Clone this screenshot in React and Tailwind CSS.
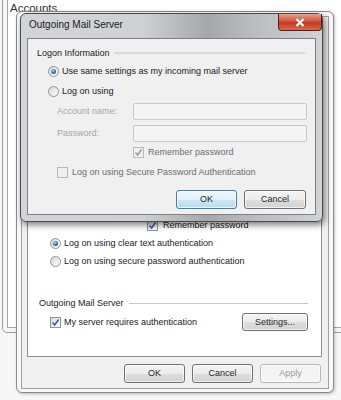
import React from "react";

function Radio({ checked }) {
  return (
    <span className="flex h-[11px] w-[11px] shrink-0 items-center justify-center rounded-full border border-[#8f9496] bg-[linear-gradient(135deg,#d4d6d8,#ffffff)]">
      {checked && (
        <span className="h-[5px] w-[5px] rounded-full bg-[radial-gradient(circle_at_40%_35%,#a9d8f3,#2f6da3_55%,#1d456e)]" />
      )}
    </span>
  );
}

function Check({ checked, disabled }) {
  return (
    <span
      className={
        "flex h-[11px] w-[11px] shrink-0 items-center justify-center border " +
        (disabled
          ? "border-[#b8b8b8] bg-[#f0f0f0]"
          : "border-[#8f9496] bg-[linear-gradient(135deg,#d8dadc,#ffffff)]")
      }
    >
      {checked && (
        <svg width="9" height="9" viewBox="0 0 9 9">
          <path
            d="M1.5 4.5 L3.6 7 L7.6 1.5"
            fill="none"
            stroke={disabled ? "#9a9a9a" : "#3d5a8c"}
            strokeWidth="1.5"
          />
        </svg>
      )}
    </span>
  );
}

function Btn({ children, kind = "normal", className = "" }) {
  const styles = {
    normal:
      "border-[#707070] bg-[linear-gradient(180deg,#f4f4f4_0%,#ececec_50%,#dedede_50%,#d2d2d2_100%)] text-[#1e1e1e]",
    def: "border-[#3c7fb1] bg-[linear-gradient(180deg,#eef7fc_0%,#e0f1fb_50%,#cbe7f8_50%,#b6dcf3_100%)] text-[#1e1e1e]",
    disabled: "border-[#b5b8ba] bg-[#f4f4f4] text-[#9a9a9a]",
  };
  return (
    <div
      className={
        "flex items-center justify-center rounded-[3px] border shadow-[inset_0_0_0_1px_rgba(255,255,255,0.7)] " +
        styles[kind] +
        " " +
        className
      }
    >
      {children}
    </div>
  );
}

export default function App() {
  return (
    <div className="relative h-[400px] w-[341px] overflow-hidden bg-[#f7f7f7] font-['Liberation_Sans',Arial,sans-serif] text-[9px] leading-[11px] text-[#202020]">
      {/* Accounts window (back) */}
      <div className="absolute left-[2px] top-[-20px] h-[353px] w-[400px] rounded-[5px] border border-[#9c9c9c] bg-[#f6f6f6] p-[4px]">
        <div className="h-full border border-[#a6a6a6] bg-white pl-[2px] pt-[16px] text-[11.5px] leading-[13px] text-[#303030]">
          Accounts
        </div>
      </div>

      {/* Middle dialog */}
      <div className="absolute left-[16px] top-[11px] h-[382px] w-[318px] rounded-[6px] border border-[#8a8a8a] bg-[#f8f8f8] px-[4px] pb-[3px] pt-[4px] shadow-[1px_1px_3px_rgba(0,0,0,0.25)]">
        <div className="flex h-full flex-col border border-[#a0a0a0] bg-[#f0f0f0] pb-[5px] pl-[5px] pr-[6px] pt-[24px]">
          <div className="flex flex-1 flex-col justify-end border border-[#8e8f8f] bg-white pb-[24px]">
            <div className="flex h-[18px] items-center gap-[5px] pl-[119px]">
              <Check checked />
              <span>Remember password</span>
            </div>
            <div className="flex h-[18px] items-center gap-[3px] pl-[22px]">
              <Radio checked />
              <span>Log on using clear text authentication</span>
            </div>
            <div className="flex h-[18px] items-center gap-[3px] pl-[22px]">
              <Radio />
              <span>Log on using secure password authentication</span>
            </div>
            <div className="h-[24px]" />
            <div className="flex h-[18px] items-center pl-[11px] pr-[13px]">
              <span>Outgoing Mail Server</span>
              <div className="ml-[5px] h-0 flex-1 border-t border-[#c8c8c8]" />
            </div>
            <div className="flex h-[20px] items-center pl-[22px] pr-[13px]">
              <Check checked />
              <span className="ml-[3px]">My server requires authentication</span>
              <Btn className="ml-auto h-[18px] w-[66px]">Settings...</Btn>
            </div>
          </div>
          <div className="mt-[7px] flex justify-end gap-[7px] pr-[1px]">
            <Btn className="h-[19px] w-[61px]">OK</Btn>
            <Btn className="h-[19px] w-[61px]">Cancel</Btn>
            <Btn kind="disabled" className="h-[19px] w-[61px]">Apply</Btn>
          </div>
        </div>
      </div>

      {/* Front dialog: Outgoing Mail Server */}
      <div className="absolute left-[20px] top-[13px] flex h-[209px] w-[303px] flex-col rounded-[6px] border border-[#4a4a4a] bg-[linear-gradient(90deg,#d2d5d8_0%,#cfd2d5_40%,#a5a8ab_62%,#bbbec1_78%,#d0d3d6_100%)] px-[6px] pb-[6px] shadow-[2px_3px_6px_rgba(0,0,0,0.5)]">
        <div className="-mr-[6px] flex h-[24px] items-start">
          <span className="pl-[2px] pt-[5px] text-[10px] leading-[12px] text-[#1a1a1a]">
            Outgoing Mail Server
          </span>
          <div className="ml-auto flex h-[17px] w-[44px] items-center justify-center rounded-b-[4px] border border-t-0 border-[#5a1c14] bg-[linear-gradient(180deg,#e8a08f_0%,#d4543c_45%,#c23a22_55%,#d86a4e_100%)]">
            <svg width="10" height="9" viewBox="0 0 10 9">
              <path d="M1.5 1 L8.5 8 M8.5 1 L1.5 8" stroke="white" strokeWidth="2.2" />
            </svg>
          </div>
        </div>
        <div className="flex flex-1 flex-col border border-[#7d8185] bg-[#f0f0f0] pt-[6px]">
          <div className="flex h-[16px] items-center pl-[9px] pr-[10px]">
            <span>Logon Information</span>
            <div className="ml-[4px] h-[2px] flex-1 bg-[#d8d8d8]" />
          </div>
          <div className="flex h-[20px] items-center gap-[3px] pl-[20px]">
            <Radio checked />
            <span>Use same settings as my incoming mail server</span>
          </div>
          <div className="flex h-[20px] items-center gap-[3px] pl-[20px]">
            <Radio />
            <span>Log on using</span>
          </div>
          <div className="flex h-[20px] items-center pl-[29px] pr-[8px] text-[#a6a6a6]">
            <span>Account name:</span>
            <div className="ml-auto h-[17px] w-[174px] rounded-[2px] border border-[#c8c8c8] bg-[#f4f4f4]" />
          </div>
          <div className="mt-[2px] flex h-[20px] items-center pl-[29px] pr-[8px] text-[#a6a6a6]">
            <span>Password:</span>
            <div className="ml-auto h-[17px] w-[174px] rounded-[2px] border border-[#c8c8c8] bg-[#f4f4f4]" />
          </div>
          <div className="flex h-[19px] items-center gap-[4px] pl-[105px] text-[#6d6d6d]">
            <Check checked disabled />
            <span>Remember password</span>
          </div>
          <div className="flex h-[20px] items-center gap-[4px] pl-[29px] text-[#6d6d6d]">
            <Check disabled />
            <span>Log on using Secure Password Authentication</span>
          </div>
          <div className="mt-[8px] flex justify-end gap-[7px] pr-[9px]">
            <Btn kind="def" className="h-[19px] w-[61px]">OK</Btn>
            <Btn className="h-[19px] w-[62px]">Cancel</Btn>
          </div>
        </div>
      </div>
    </div>
  );
}
